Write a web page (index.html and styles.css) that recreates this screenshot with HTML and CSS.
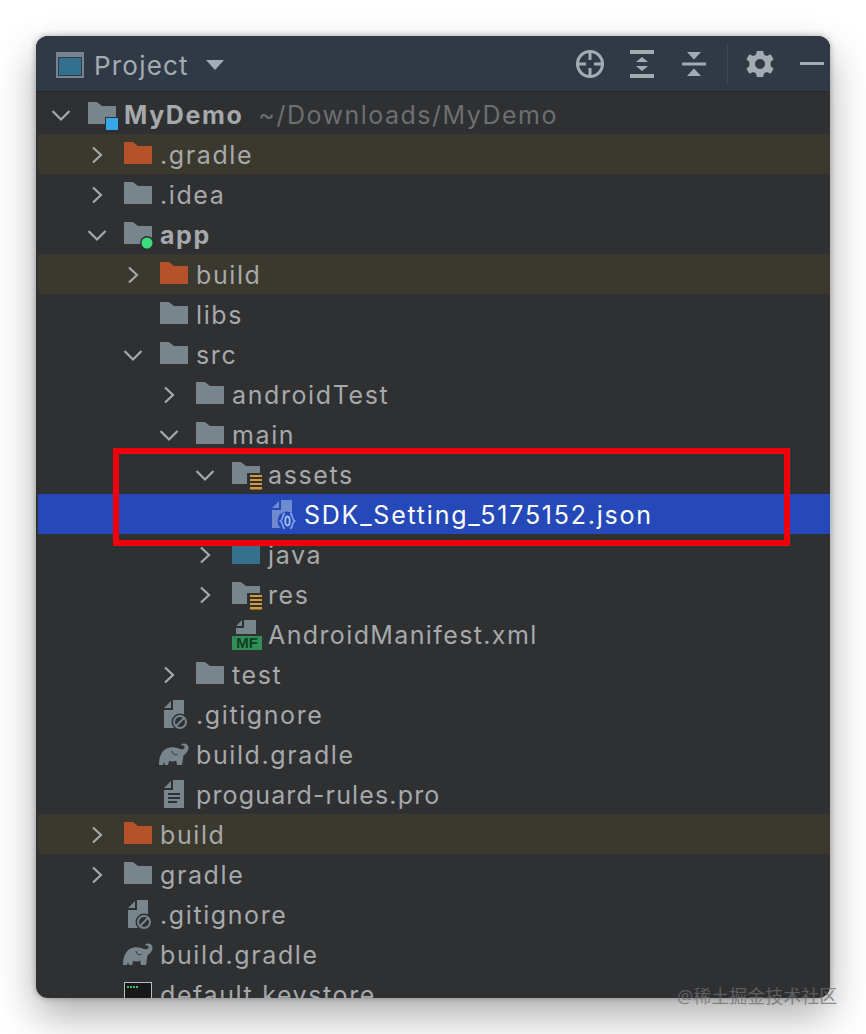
FILE: index.html
```html
<!DOCTYPE html>
<html lang="en">
<head>
    <meta charset="UTF-8">
    <meta name="viewport" content="width=device-width, initial-scale=1.0">
    <title>Project</title>
    <link rel="stylesheet" href="styles.css">
</head>
<body>
    <svg class="defs" width="0" height="0">
        <defs>
            <symbol id="chev-right" viewBox="0 0 24 24"><path d="M8 4.500l8 7.500-8 7.500" fill="none" stroke="currentColor" stroke-width="2.200"/></symbol>
            <symbol id="chev-down" viewBox="0 0 24 24"><path d="M3.500 8l8.500 8.500L20.500 8" fill="none" stroke="currentColor" stroke-width="2.200"/></symbol>
            <symbol id="folder" viewBox="0 0 32 30"><path d="M2 2h9l5 4h14v18H2z" fill="currentColor"/></symbol>
            <symbol id="res-lines" viewBox="0 0 32 30"><path d="M17 13h15v17H17z" fill="#2f3032"/><path d="M20 15h12v2H20zM20 19h12v2H20zM20 23h12v2H20zM20 27h12v2.500H20z" fill="#d49a3a"/></symbol>
            <symbol id="elephant" viewBox="0 0 32 30"><path d="M1 25C1 16 4 9 12 7.500c4-.7 7 .3 10 1.500 2 .8 4 .3 4.500-1.500.4-1.500-.8-2.400-2-1.700L23 4.500c2.500-2 7-1 7.500 2.500.5 4-3 7-5 8.500L24 25h-5l-.8-4.500c-2 1.200-5 1.200-7 .2L10 25H7l-1-3-1 3z" fill="currentColor"/><path d="M14 11c.5 3 3 4.500 5.500 3.500" fill="none" stroke="#2f3032" stroke-width="1"/></symbol>
            <symbol id="ignore" viewBox="0 0 32 30"><path d="M6 8l7-7v7zM15 0h11v28H6V10h9z" fill="currentColor"/><circle cx="22" cy="22" r="8.500" fill="#2f3032"/><circle cx="22" cy="22" r="6" fill="none" stroke="currentColor" stroke-width="2"/><path d="M18 26l8-8" stroke="currentColor" stroke-width="2"/></symbol>
        </defs>
    </svg>

    <div class="window">
        <header class="toolbar">
            <svg class="project-icon" width="28" height="26" viewBox="0 0 28 26"><path d="M0 0h28v26H0z" fill="#76858f"/><path d="M2 5h24v19H2z" fill="#2f3a46"/><path d="M3 6h22v17H3z" fill="#33708f"/></svg>
            <span class="toolbar-title">Project</span>
            <svg class="caret" width="18" height="10" viewBox="0 0 18 10"><path d="M0 0h18L9 10z" fill="#a4abb2"/></svg>
            <div class="tools">
                <svg class="tool" width="32" height="32" viewBox="0 0 32 32" fill="none" stroke="#a4abb2" stroke-width="3"><circle cx="16" cy="16" r="12.500"/><path d="M16 2v10M16 20v10M2 16h10M20 16h10"/></svg>
                <svg class="tool" width="32" height="32" viewBox="0 0 32 32" fill="#a4abb2"><path d="M4 2h24v4H4zM4 26h24v4H4zM16 9l6 5H10zM16 23l-6-5h12z"/></svg>
                <svg class="tool" width="32" height="32" viewBox="0 0 32 32" fill="#a4abb2"><path d="M4 14.500h24v3H4zM9 4h14l-7 7.500zM16 20.500l7 7.500H9z"/></svg>
                <span class="tool-sep"></span>
                <svg class="tool" width="32" height="32" viewBox="0 0 32 32"><path d="M13 3h6l1.200 3.800 2.800 1.200 3.600-1.800 3 5-3 2.700v4.200l3 2.700-3 5-3.600-1.800-2.800 1.200L19 29h-6l-1.200-3.800-2.800-1.200-3.600 1.800-3-5 3-2.700v-4.200l-3-2.700 3-5L9 8l2.800-1.200z" fill="#a4abb2"/><circle cx="16" cy="16" r="5" fill="#2f3a46"/></svg>
                <span class="tool-min"></span>
            </div>
        </header>

        <div class="tree">
            <div class="row d0"><svg class="arrow"><use href="#chev-down"/></svg><svg class="icon grey"><use href="#folder"/><rect x="19" y="17" width="13" height="13" fill="#2f3032"/><rect x="20" y="18" width="12" height="12" fill="#35a7e8"/></svg><span class="name bold">MyDemo</span><span class="path">~/Downloads/MyDemo</span></div>
            <div class="row d1 excluded"><svg class="arrow"><use href="#chev-right"/></svg><svg class="icon orange"><use href="#folder"/></svg><span class="name">.gradle</span></div>
            <div class="row d1"><svg class="arrow"><use href="#chev-right"/></svg><svg class="icon grey"><use href="#folder"/></svg><span class="name">.idea</span></div>
            <div class="row d1"><svg class="arrow"><use href="#chev-down"/></svg><svg class="icon grey"><use href="#folder"/><circle cx="25" cy="23" r="7" fill="#2f3032"/><circle cx="25" cy="23" r="5.500" fill="#3ddc7c"/></svg><span class="name bold">app</span></div>
            <div class="row d2 excluded"><svg class="arrow"><use href="#chev-right"/></svg><svg class="icon orange"><use href="#folder"/></svg><span class="name">build</span></div>
            <div class="row d2"><span class="arrow"></span><svg class="icon grey"><use href="#folder"/></svg><span class="name">libs</span></div>
            <div class="row d2"><svg class="arrow"><use href="#chev-down"/></svg><svg class="icon grey"><use href="#folder"/></svg><span class="name">src</span></div>
            <div class="row d3"><svg class="arrow"><use href="#chev-right"/></svg><svg class="icon grey"><use href="#folder"/></svg><span class="name">androidTest</span></div>
            <div class="row d3"><svg class="arrow"><use href="#chev-down"/></svg><svg class="icon grey"><use href="#folder"/></svg><span class="name">main</span></div>
            <div class="row d4"><svg class="arrow"><use href="#chev-down"/></svg><svg class="icon grey"><use href="#folder"/><use href="#res-lines"/></svg><span class="name">assets</span></div>
            <div class="row d5 selected"><span class="arrow"></span><svg class="icon json" viewBox="0 0 32 30"><path d="M6 8l7-7v7zM15 0h11v28H6V10h9z" fill="#6f8bd0"/><circle cx="21" cy="21" r="9.500" fill="#2549b9"/><path d="M19 13.500c-3 0-1.500 6-4.500 7.500 3 1.500 1.500 7.500 4.500 7.500M24 13.500c3 0 1.500 6 4.500 7.500-3 1.500-1.500 7.500-4.500 7.500" fill="none" stroke="#7ea0ea" stroke-width="1.800"/><ellipse cx="21.500" cy="21" rx="2.200" ry="4.500" fill="none" stroke="#a8c0f2" stroke-width="1.800"/></svg><span class="name">SDK_Setting_5175152.json</span></div>
            <div class="row d4"><svg class="arrow"><use href="#chev-right"/></svg><svg class="icon blue"><use href="#folder"/></svg><span class="name">java</span></div>
            <div class="row d4"><svg class="arrow"><use href="#chev-right"/></svg><svg class="icon grey"><use href="#folder"/><use href="#res-lines"/></svg><span class="name">res</span></div>
            <div class="row d4"><span class="arrow"></span><svg class="icon grey" viewBox="0 0 32 30"><path d="M6 6l6-6v6zM14 0h12v14H6V8h8z" fill="currentColor"/><path d="M2 16h30v14H2z" fill="#2f8f57"/><text x="17" y="28" class="mf">MF</text></svg><span class="name tight">AndroidManifest.xml</span></div>
            <div class="row d3"><svg class="arrow"><use href="#chev-right"/></svg><svg class="icon grey"><use href="#folder"/></svg><span class="name">test</span></div>
            <div class="row d2"><span class="arrow"></span><svg class="icon grey"><use href="#ignore"/></svg><span class="name">.gitignore</span></div>
            <div class="row d2"><span class="arrow"></span><svg class="icon grey"><use href="#elephant"/></svg><span class="name">build.gradle</span></div>
            <div class="row d2"><span class="arrow"></span><svg class="icon grey" viewBox="0 0 32 30"><path d="M6 8l7-7v7zM15 0h11v28H6V10h9z" fill="currentColor"/><path d="M10 13h12v2H10zM10 17h12v2H10zM10 21h9v2h-9z" fill="#2f3032"/></svg><span class="name tighter">proguard-rules.pro</span></div>
            <div class="row d1 excluded"><svg class="arrow"><use href="#chev-right"/></svg><svg class="icon orange"><use href="#folder"/></svg><span class="name">build</span></div>
            <div class="row d1"><svg class="arrow"><use href="#chev-right"/></svg><svg class="icon grey"><use href="#folder"/></svg><span class="name">gradle</span></div>
            <div class="row d1"><span class="arrow"></span><svg class="icon grey"><use href="#ignore"/></svg><span class="name">.gitignore</span></div>
            <div class="row d1"><span class="arrow"></span><svg class="icon grey"><use href="#elephant"/></svg><span class="name">build.gradle</span></div>
            <div class="row d1"><span class="arrow"></span><svg class="icon" viewBox="0 0 32 30"><path d="M2 2h28v28H2z" fill="#b9bcbe"/><path d="M3 3h26v27H3z" fill="#16181a"/><path d="M5 6h2v2H5zM8 6h2v2H8zM11 6h2v2h-2zM14 6h2v2h-2z" fill="#3fbf5f"/></svg><span class="name">default.keystore</span></div>
        </div>
    </div>

    <div class="marker"></div>
    <div class="watermark">@稀土掘金技术社区</div>
</body>
</html>
```

FILE: styles.css
```css
body {
    margin: 0;
    padding: 36px;
    height: 1034px;
    box-sizing: border-box;
    overflow: hidden;
    background-color: #ffffff;
    font-family: Inter, "Noto Sans", sans-serif;
}
.defs {
    display: block;
}
.window {
    width: 794px;
    height: 962px;
    overflow: hidden;
    border-radius: 12px;
    background-color: #2f3032;
    box-shadow: 0 18px 40px rgba(0, 0, 0, 0.32), 0 0 6px rgba(0, 0, 0, 0.3);
}
.toolbar {
    height: 55px;
    display: flex;
    align-items: center;
    padding-left: 20px;
    background-color: #2f3a46;
    box-shadow: 0 1px 0 #26282a;
}
.project-icon {
    flex: none;
    margin-top: 2px;
}
.toolbar-title {
    margin-left: 10px;
    padding-top: 3px;
    color: #a4abb2;
    font-size: 26px;
    letter-spacing: 1.2px;
}
.caret {
    margin-left: 17px;
    margin-top: 3px;
}
.tools {
    margin-left: auto;
    display: flex;
    align-items: center;
    padding-right: 6px;
}
.tool {
    flex: none;
    margin-left: 20px;
}
.tool-sep {
    width: 1px;
    height: 40px;
    margin-left: 17px;
    margin-right: -4px;
    background-color: #3f4a50;
}
.tool-min {
    width: 24px;
    height: 3px;
    margin-left: 24px;
    background-color: #a4abb2;
}
.tree {
    padding-top: 3px;
    padding-left: 2px;
}
.row {
    height: 40px;
    box-sizing: border-box;
    padding-top: 2px;
    display: flex;
    align-items: center;
    color: #a6a9ab;
    font-size: 25px;
    letter-spacing: 1.6px;
    white-space: nowrap;
}
.d0 { padding-left: 11px; }
.d1 { padding-left: 47px; }
.d2 { padding-left: 83px; }
.d3 { padding-left: 119px; }
.d4 { padding-left: 155px; }
.d5 { padding-left: 191px; }
.row.excluded {
    background-color: #3b382d;
}
.row.selected {
    background-color: #2549b9;
    color: #ffffff;
    letter-spacing: 1.77px;
}
.arrow {
    flex: none;
    display: block;
    width: 24px;
    height: 24px;
    color: #a6a9ab;
}
.icon {
    flex: none;
    width: 32px;
    height: 30px;
    margin-left: 13px;
}
.grey { color: #77858c; }
.orange { color: #b5522a; }
.blue { color: #35708f; }
.name {
    margin-left: 6px;
}
.tight {
    letter-spacing: 1.38px;
}
.tighter {
    letter-spacing: 1.15px;
}
.bold {
    font-weight: 700;
}
.path {
    margin-left: 15px;
    color: #6c6f72;
    letter-spacing: 1.5px;
}
.mf {
    fill: #123f24;
    font-family: "Liberation Sans", sans-serif;
    font-size: 15px;
    font-weight: 700;
    letter-spacing: 0;
    text-anchor: middle;
}
.marker {
    position: absolute;
    left: 113px;
    top: 448px;
    width: 665px;
    height: 86px;
    border: 6px solid #f00008;
    z-index: 2;
}
.watermark {
    position: absolute;
    left: 677px;
    top: 984px;
    color: rgba(110, 110, 110, 0.75);
    font-family: "Noto Sans", "Noto Sans CJK SC", sans-serif;
    font-size: 18px;
    line-height: 24px;
    white-space: nowrap;
    z-index: 3;
}
```
